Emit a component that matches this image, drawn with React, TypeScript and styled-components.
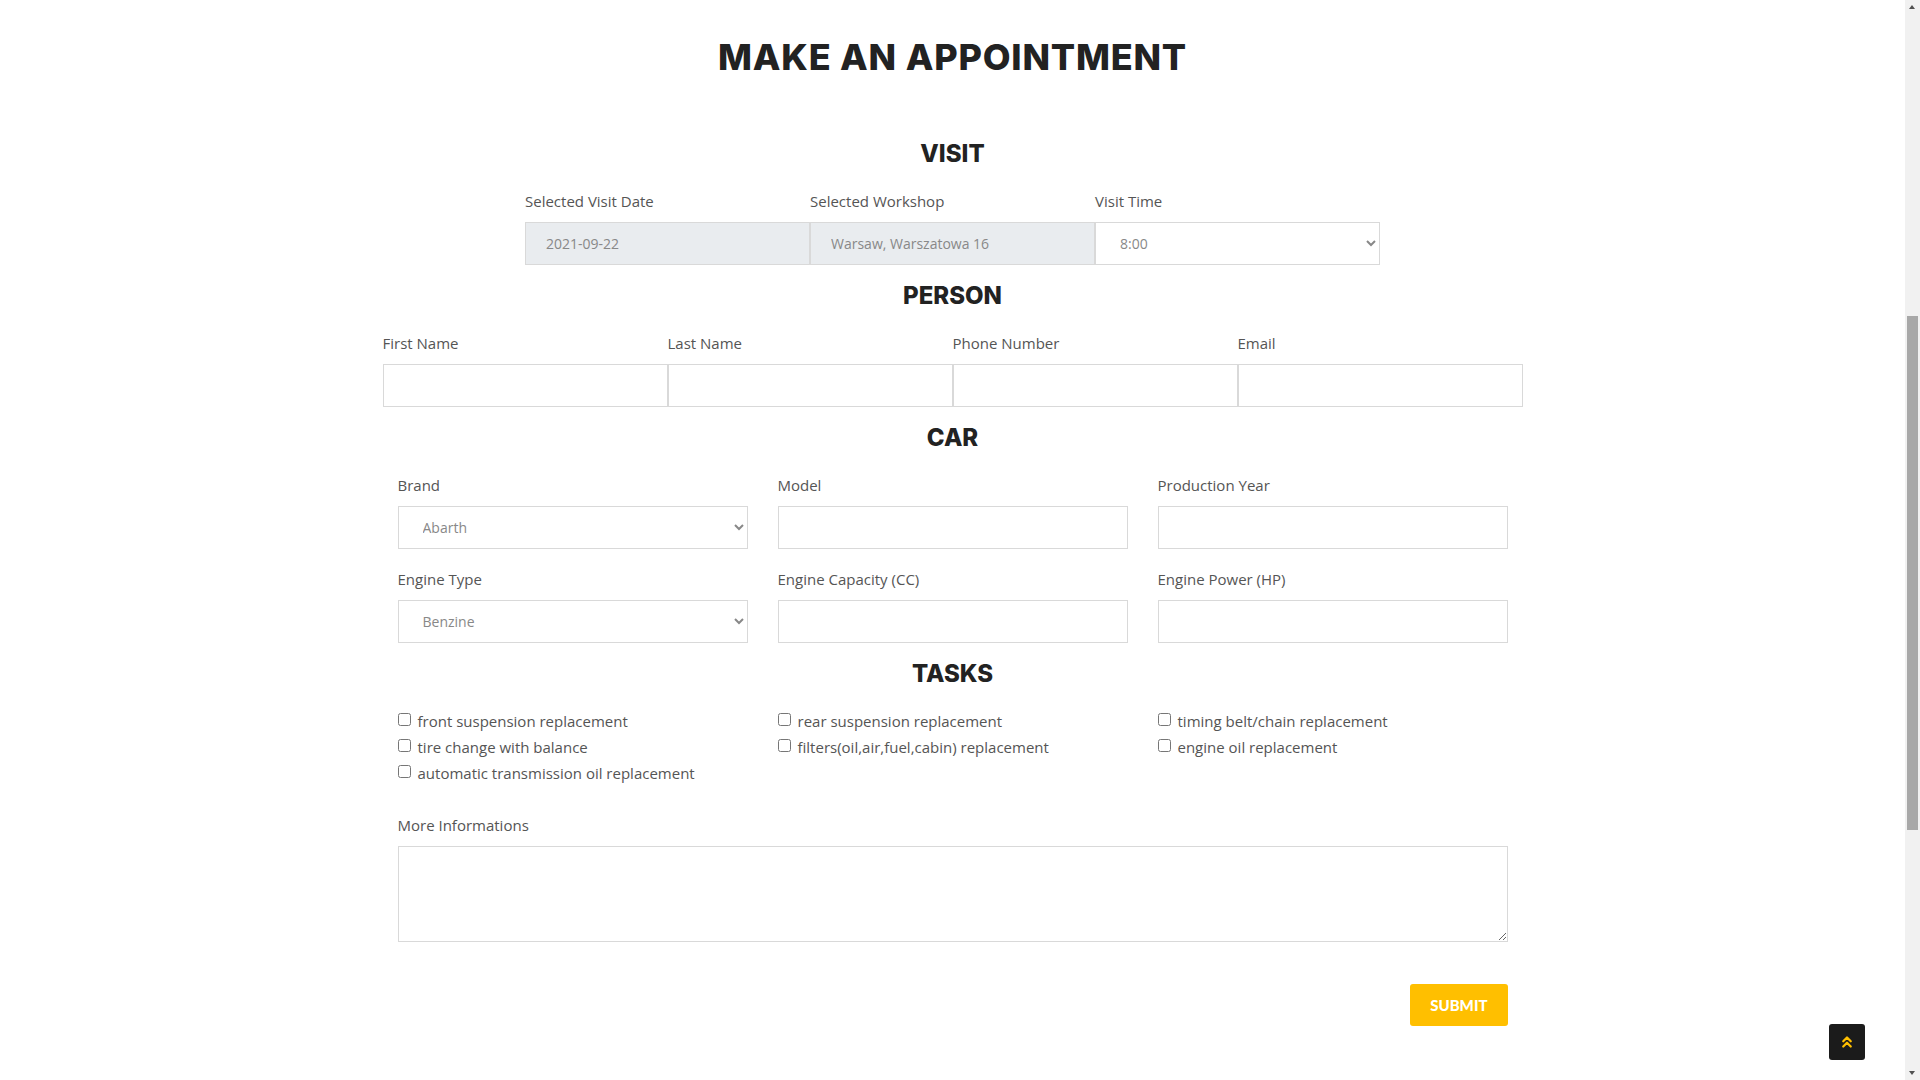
import React from 'react'
import styled, { createGlobalStyle } from 'styled-components'
import { ChevronsUp } from 'lucide-react'

const GlobalStyle = createGlobalStyle`
  body {
    margin: 0;
    padding-right: 15px;
    background: #fff;
    font-family: 'Open Sans', 'Liberation Sans', sans-serif;
    color: #555;
  }
  * {
    box-sizing: border-box;
  }
`

const Section = styled.section`
  padding: 34px 0 40px;
`

const Container = styled.div`
  width: 1140px;
  margin: 0 auto;
`

const PageTitle = styled.h2`
  margin: 0 0 59px;
  font-family: 'Inter', 'Liberation Sans', sans-serif;
  font-weight: 800;
  font-size: 36px;
  line-height: 46px;
  letter-spacing: 0.8px;
  text-align: center;
  color: #222;
  text-transform: uppercase;
`

const BlockTitle = styled.h3`
  margin: 16px 0 21px;
  font-family: 'Inter', 'Liberation Sans', sans-serif;
  font-weight: 800;
  font-size: 24px;
  line-height: 30px;
  text-align: center;
  color: #222;
  text-transform: uppercase;

  &:first-of-type {
    margin-top: 0;
  }
`

const JoinedRow = styled.div<{ $cols: number }>`
  display: grid;
  grid-template-columns: repeat(${({ $cols }) => $cols}, 285px);
  justify-content: center;
`

const GridRow = styled.div`
  display: grid;
  grid-template-columns: repeat(3, 1fr);
  column-gap: 30px;
  row-gap: 19px;
  padding: 0 15px;
`

const Field = styled.div`
  display: flex;
  flex-direction: column;
`

const Label = styled.label`
  font-size: 15px;
  line-height: 22px;
  margin-bottom: 10px;
  color: #555;
`

const Input = styled.input`
  height: 43px;
  width: 100%;
  padding: 0 20px;
  border: 1px solid #d9d9d9;
  border-radius: 0;
  background: #fff;
  font-family: inherit;
  font-size: 14px;
  color: #888;
  outline: none;

  &:disabled {
    background: #e9ecef;
  }
`

const Select = styled.select`
  height: 43px;
  width: 100%;
  padding: 0 20px;
  border: 1px solid #d9d9d9;
  border-radius: 0;
  background: #fff;
  font-family: inherit;
  font-size: 14px;
  color: #888;
  outline: none;
`

const TaskGrid = styled.div`
  display: grid;
  grid-template-columns: repeat(3, 1fr);
  column-gap: 30px;
  padding: 0 15px;
`

const TaskItem = styled.label`
  display: flex;
  align-items: center;
  font-size: 15px;
  line-height: 22px;
  margin-bottom: 4px;
  color: #555;

  input {
    margin: 0 7px 3px 0;
    width: 13px;
    height: 13px;
  }
`

const InfoBlock = styled.div`
  display: flex;
  flex-direction: column;
  padding: 0 15px;
  margin-top: 26px;
`

const TextArea = styled.textarea`
  height: 96px;
  border: 1px solid #d9d9d9;
  border-radius: 0;
  padding: 10px 20px;
  font-family: inherit;
  font-size: 14px;
  outline: none;
`

const Actions = styled.div`
  display: flex;
  justify-content: flex-end;
  padding: 0 15px;
  margin-top: 42px;
`

const SubmitButton = styled.button`
  height: 42px;
  padding: 0 20px;
  border: none;
  border-radius: 3px;
  background: #ffbf00;
  color: #fff;
  font-family: 'Lato', 'Liberation Sans', sans-serif;
  font-weight: 900;
  font-size: 15px;
  text-transform: uppercase;
  cursor: pointer;
`

const ScrollTop = styled.a`
  position: fixed;
  right: 55px;
  bottom: 20px;
  width: 36px;
  height: 36px;
  display: flex;
  align-items: center;
  justify-content: center;
  background: #1b1b1b;
  border-radius: 3px;
  color: #ffbf00;
`

/* browser scrollbar, drawn over the right edge of the window */
const ScrollTrack = styled.div`
  position: fixed;
  top: 0;
  right: 0;
  bottom: 0;
  width: 15px;
  background: #f1f1f1;
`

const ScrollThumb = styled.div`
  position: absolute;
  left: 2px;
  right: 2px;
  top: 316px;
  height: 514px;
  background: #a8a8a8;
`

const ScrollArrow = styled.div<{ $down?: boolean }>`
  position: absolute;
  left: 4px;
  width: 0;
  height: 0;
  border-left: 3.5px solid transparent;
  border-right: 3.5px solid transparent;
  ${({ $down }) =>
    $down
      ? 'bottom: 5px; border-top: 4px solid #505050;'
      : 'top: 5px; border-bottom: 4px solid #505050;'}
`

const tasks = [
  'front suspension replacement',
  'rear suspension replacement',
  'timing belt/chain replacement',
  'tire change with balance',
  'filters(oil,air,fuel,cabin) replacement',
  'engine oil replacement',
  'automatic transmission oil replacement'
]

const App: React.FC = () => {
  return (
    <>
      <GlobalStyle />
      <Section>
        <Container>
          <PageTitle>Make an appointment</PageTitle>

          <BlockTitle>Visit</BlockTitle>
          <JoinedRow $cols={3}>
            <Field>
              <Label>Selected Visit Date</Label>
              <Input disabled value="2021-09-22" readOnly />
            </Field>
            <Field>
              <Label>Selected Workshop</Label>
              <Input disabled value="Warsaw, Warszatowa 16" readOnly />
            </Field>
            <Field>
              <Label>Visit Time</Label>
              <Select defaultValue="8:00">
                <option>8:00</option>
                <option>9:00</option>
                <option>10:00</option>
              </Select>
            </Field>
          </JoinedRow>

          <BlockTitle>Person</BlockTitle>
          <JoinedRow $cols={4}>
            <Field>
              <Label>First Name</Label>
              <Input />
            </Field>
            <Field>
              <Label>Last Name</Label>
              <Input />
            </Field>
            <Field>
              <Label>Phone Number</Label>
              <Input />
            </Field>
            <Field>
              <Label>Email</Label>
              <Input />
            </Field>
          </JoinedRow>

          <BlockTitle>Car</BlockTitle>
          <GridRow>
            <Field>
              <Label>Brand</Label>
              <Select defaultValue="Abarth">
                <option>Abarth</option>
                <option>Alfa Romeo</option>
              </Select>
            </Field>
            <Field>
              <Label>Model</Label>
              <Input />
            </Field>
            <Field>
              <Label>Production Year</Label>
              <Input />
            </Field>
            <Field>
              <Label>Engine Type</Label>
              <Select defaultValue="Benzine">
                <option>Benzine</option>
                <option>Diesel</option>
              </Select>
            </Field>
            <Field>
              <Label>Engine Capacity (CC)</Label>
              <Input />
            </Field>
            <Field>
              <Label>Engine Power (HP)</Label>
              <Input />
            </Field>
          </GridRow>

          <BlockTitle>Tasks</BlockTitle>
          <TaskGrid>
            {tasks.map((t) => (
              <TaskItem key={t}>
                <input type="checkbox" />
                {t}
              </TaskItem>
            ))}
          </TaskGrid>

          <InfoBlock>
            <Label>More Informations</Label>
            <TextArea />
          </InfoBlock>

          <Actions>
            <SubmitButton>Submit</SubmitButton>
          </Actions>
        </Container>
      </Section>
      <ScrollTop href="#">
        <ChevronsUp size={18} strokeWidth={3} />
      </ScrollTop>
      <ScrollTrack>
        <ScrollArrow />
        <ScrollThumb />
        <ScrollArrow $down />
      </ScrollTrack>
    </>
  )
}

export default App
